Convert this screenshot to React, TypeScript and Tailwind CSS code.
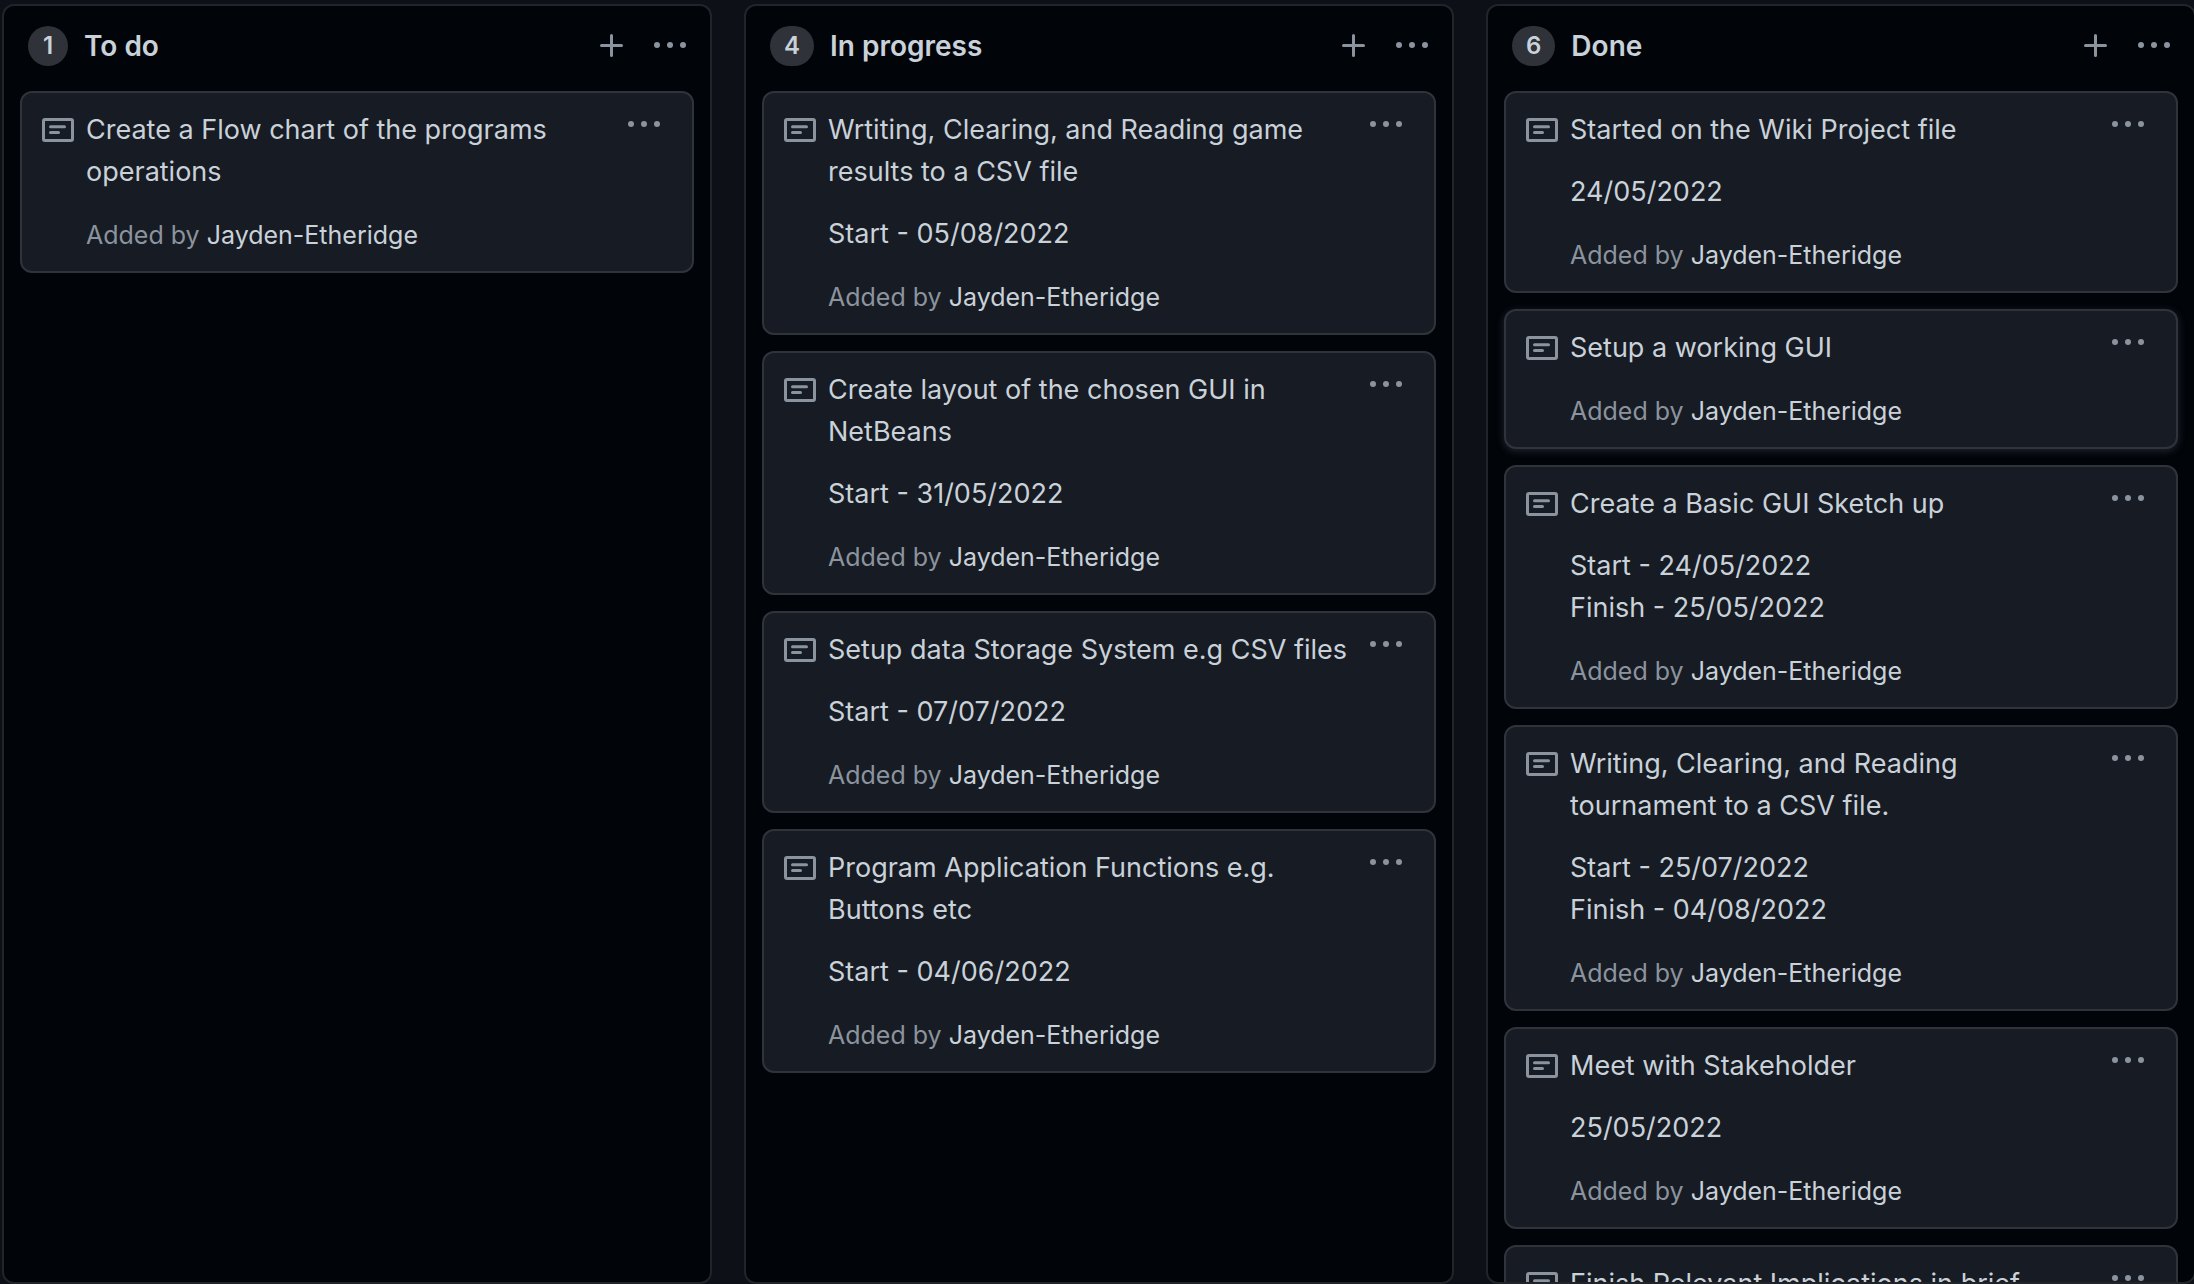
type Note = {
  title: string;
  details?: string[];
  raised?: boolean;
};

type BoardColumn = {
  name: string;
  count: number;
  notes: Note[];
};

const columns: BoardColumn[] = [
  {
    name: "To do",
    count: 1,
    notes: [{ title: "Create a Flow chart of the programs operations" }],
  },
  {
    name: "In progress",
    count: 4,
    notes: [
      {
        title: "Wrtiting, Clearing, and Reading game results to a CSV file",
        details: ["Start - 05/08/2022"],
      },
      {
        title: "Create layout of the chosen GUI in NetBeans",
        details: ["Start - 31/05/2022"],
      },
      {
        title: "Setup data Storage System e.g CSV files",
        details: ["Start - 07/07/2022"],
      },
      {
        title: "Program Application Functions e.g. Buttons etc",
        details: ["Start - 04/06/2022"],
      },
    ],
  },
  {
    name: "Done",
    count: 6,
    notes: [
      { title: "Started on the Wiki Project file", details: ["24/05/2022"] },
      { title: "Setup a working GUI", raised: true },
      {
        title: "Create a Basic GUI Sketch up",
        details: ["Start - 24/05/2022", "Finish - 25/05/2022"],
      },
      {
        title: "Writing, Clearing, and Reading tournament to a CSV file.",
        details: ["Start - 25/07/2022", "Finish - 04/08/2022"],
      },
      { title: "Meet with Stakeholder", details: ["25/05/2022"] },
      { title: "Finish Relevant Implications in brief" },
    ],
  },
];

function PlusIcon() {
  return (
    <svg viewBox="0 0 16 16" className="size-8" fill="currentColor" aria-hidden="true">
      <path d="M7.75 2a.75.75 0 01.75.75V7h4.25a.75.75 0 110 1.5H8.5v4.25a.75.75 0 11-1.5 0V8.5H2.75a.75.75 0 010-1.5H7V2.75A.75.75 0 017.75 2z" />
    </svg>
  );
}

function KebabIcon() {
  return (
    <svg viewBox="0 0 16 16" className="size-8" fill="currentColor" aria-hidden="true">
      <circle cx="1.5" cy="7.5" r="1.5" />
      <circle cx="8" cy="7.5" r="1.5" />
      <circle cx="14.5" cy="7.5" r="1.5" />
    </svg>
  );
}

function NoteIcon() {
  return (
    <svg
      viewBox="0 0 32 24"
      className="mt-[9px] h-6 w-8 shrink-0 text-[#8b949e]"
      fill="none"
      stroke="currentColor"
      strokeWidth="3"
      strokeLinecap="round"
      aria-hidden="true"
    >
      <rect x="1.5" y="1.5" width="29" height="21" rx="1.5" />
      <path d="M8.5 8.7h14M8.5 14.5h8" />
    </svg>
  );
}

function NoteCard({ note }: { note: Note }) {
  return (
    <li
      className={
        note.raised
          ? "flex shrink-0 items-start gap-3 rounded-xl border-2 border-[#303339] bg-[#171b23] py-4 pr-8 pl-5 shadow-[0_2px_8px_rgba(139,148,158,0.25)]"
          : "flex shrink-0 items-start gap-3 rounded-xl border-2 border-[#303339] bg-[#171b23] py-4 pr-8 pl-5"
      }
    >
      <NoteIcon />
      <div className="min-w-0 flex-1">
        <p className="text-[27px] leading-[42px]">{note.title}</p>
        {note.details && (
          <p className="mt-5 text-[27px] leading-[42px]">
            {note.details.map((line) => (
              <span key={line} className="block">
                {line}
              </span>
            ))}
          </p>
        )}
        <p className="mt-[22px] text-[25px] leading-10 text-[#8b949e]">
          Added by{" "}
          <a href="#jayden-etheridge" className="text-[#c9d1d9]">
            Jayden-Etheridge
          </a>
        </p>
      </div>
      <button type="button" aria-label="Note options" className="shrink-0 text-[#8b949e]">
        <KebabIcon />
      </button>
    </li>
  );
}

function Column({ column }: { column: BoardColumn }) {
  return (
    <section className="flex min-h-0 min-w-0 flex-col overflow-hidden rounded-xl border-2 border-[#212429] bg-[#010409]">
      <header className="flex items-start pt-5 pr-6 pb-[25px] pl-6">
        <span className="flex h-10 min-w-10 items-center justify-center rounded-full bg-[#2f3239] px-3.5 text-2xl font-semibold">
          {column.count}
        </span>
        <h2 className="ml-4 flex-1 text-[28px] leading-10 font-semibold">{column.name}</h2>
        <div className="mt-1 flex gap-[26px] text-[#8b949e]">
          <button type="button" aria-label={`Add a note to ${column.name}`}>
            <PlusIcon />
          </button>
          <button type="button" aria-label={`${column.name} column options`}>
            <KebabIcon />
          </button>
        </div>
      </header>
      <ul className="flex min-h-0 flex-1 flex-col gap-4 px-4">
        {column.notes.map((note) => (
          <NoteCard key={note.title} note={note} />
        ))}
      </ul>
    </section>
  );
}

export default function App() {
  return (
    <div className="h-screen overflow-hidden bg-[#0d1117] font-['Inter','Liberation_Sans',sans-serif] text-[#c9d1d9]">
      <main className="-mr-0.5 grid h-full grid-cols-3 grid-rows-1 gap-8 pt-1 pl-0.5">
        {columns.map((column) => (
          <Column key={column.name} column={column} />
        ))}
      </main>
    </div>
  );
}
